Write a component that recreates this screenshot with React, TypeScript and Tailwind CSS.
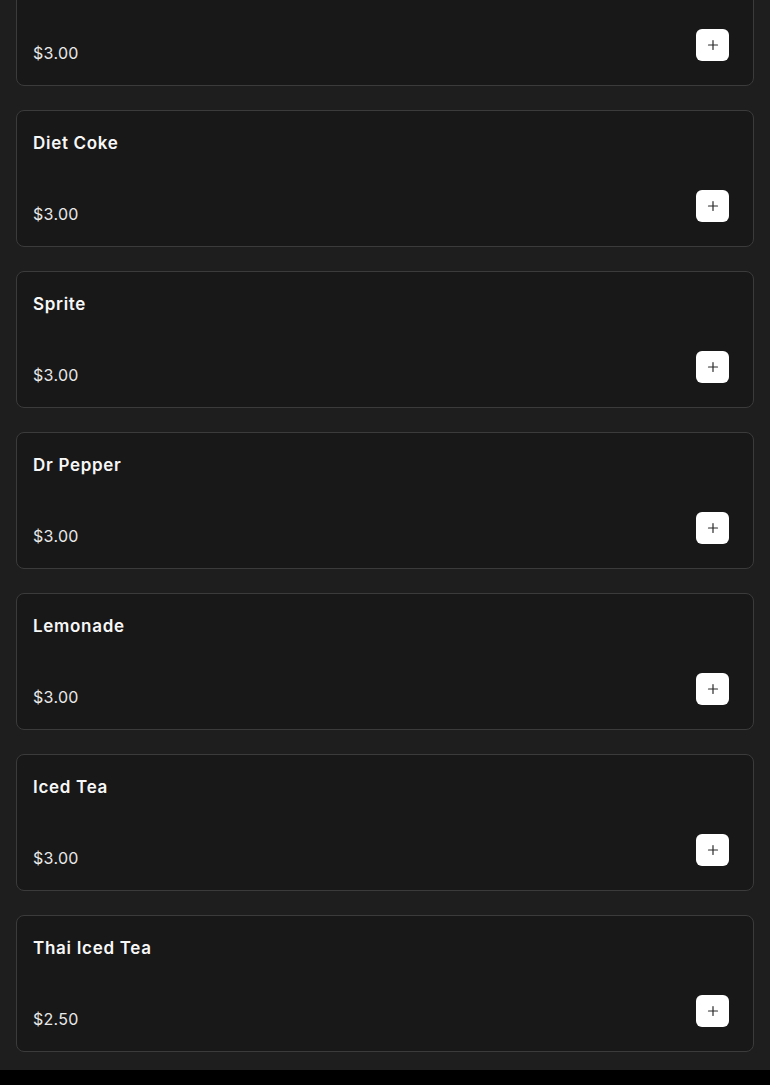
import React from "react";

const items = [
  { name: "", price: "$3.00" },
  { name: "Diet Coke", price: "$3.00" },
  { name: "Sprite", price: "$3.00" },
  { name: "Dr Pepper", price: "$3.00" },
  { name: "Lemonade", price: "$3.00" },
  { name: "Iced Tea", price: "$3.00" },
  { name: "Thai Iced Tea", price: "$2.50" },
];

function PlusIcon() {
  return (
    <svg width="12" height="12" viewBox="0 0 12 12" fill="none">
      <path d="M6 1.5v9M1.5 6h9" stroke="#2a2a2a" strokeWidth="1.2" strokeLinecap="round" />
    </svg>
  );
}

export default function App() {
  return (
    <div
      className="bg-black min-h-[1085px]"
      style={{ fontFamily: '"Inter", "Liberation Sans", sans-serif' }}
    >
      <div className="bg-[#1e1e1e] h-[1070px] overflow-hidden px-4">
        <div className="flex flex-col gap-6 mt-[-51px]">
          {items.map((it, i) => (
            <div
              key={i}
              className="h-[137px] rounded-lg border border-[#3b3b3b] bg-[#181818] pl-4 pr-6 pt-[20px] pb-5 flex flex-col justify-between"
            >
              <div className="text-[17px] leading-6 h-6 font-semibold text-[#f7f7f7] tracking-[0.7px]">
                {it.name}
              </div>
              <div className="flex items-end justify-between">
                <div className="text-[16px] leading-6 text-[#e8e8e8] tracking-[0.3px]">{it.price}</div>
                <button className="w-[33px] h-[32px] mb-[4px] rounded-md bg-white flex items-center justify-center">
                  <PlusIcon />
                </button>
              </div>
            </div>
          ))}
        </div>
      </div>
    </div>
  );
}
